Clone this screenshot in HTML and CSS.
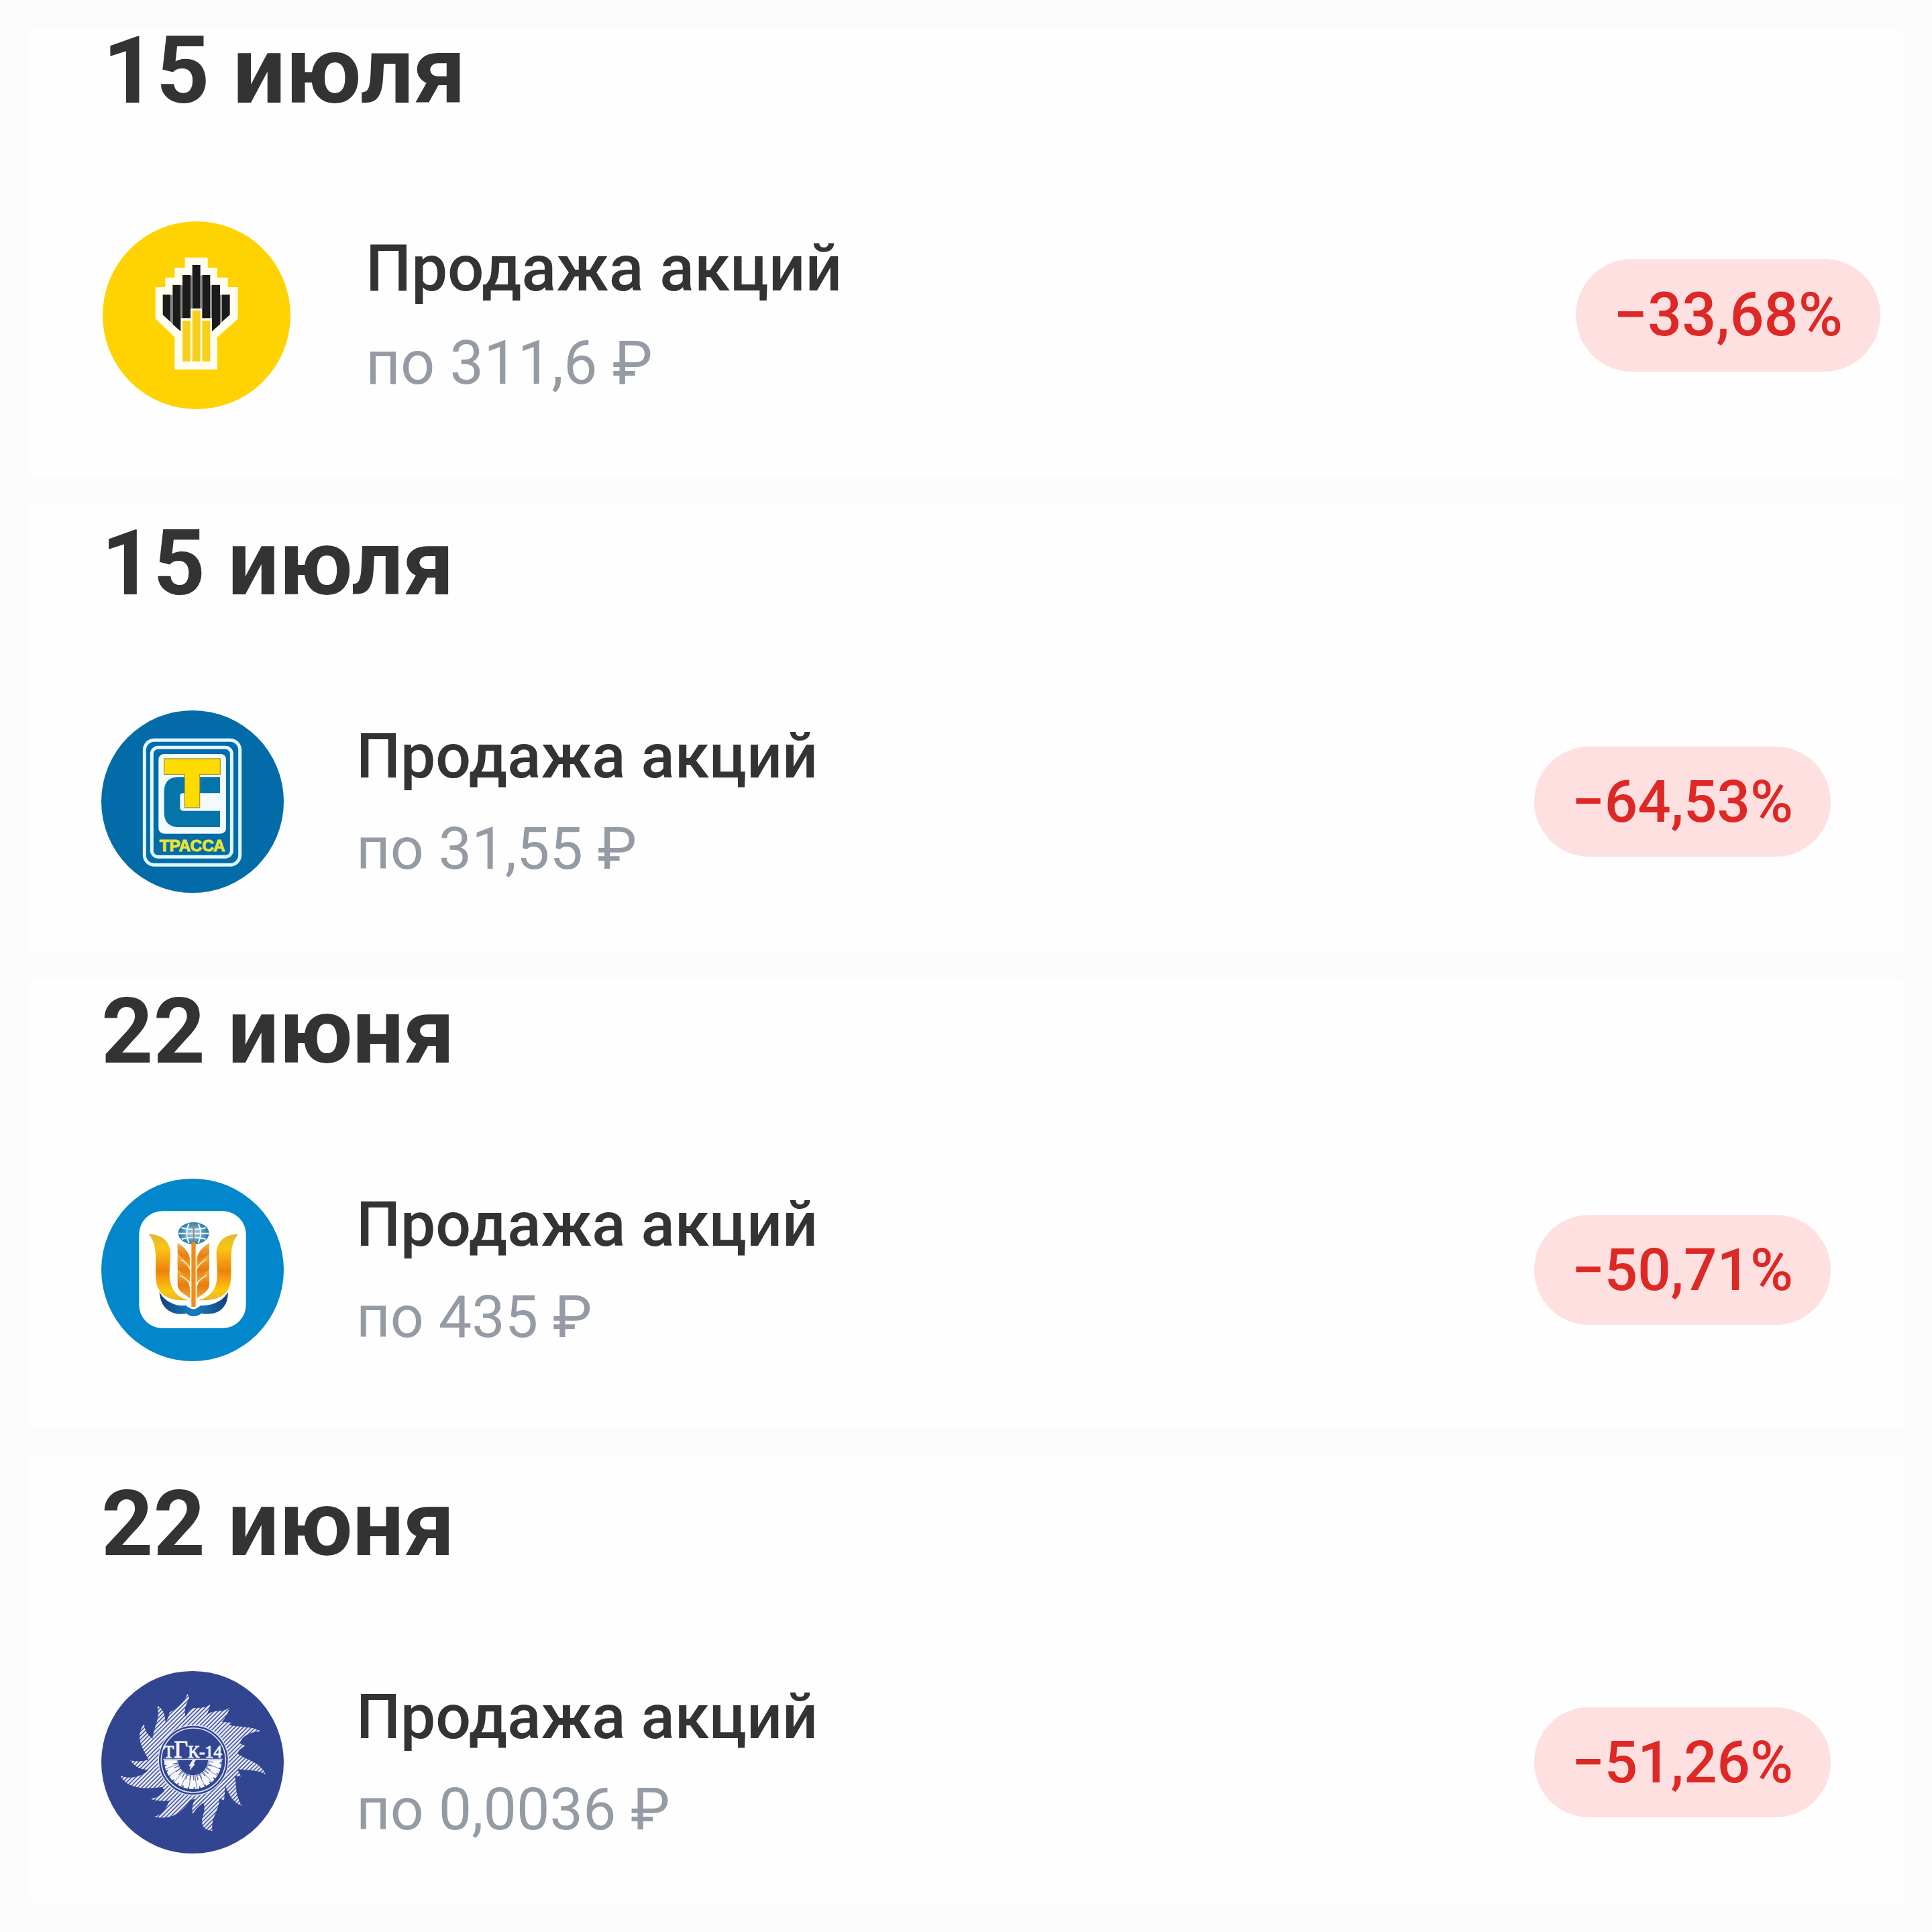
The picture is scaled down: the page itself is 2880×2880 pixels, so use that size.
FILE: index.html
```html
<!DOCTYPE html>
<html lang="ru">
<head>
    <meta charset="UTF-8">
    <meta name="viewport" content="width=device-width, initial-scale=1.0">
    <title>Продажа акций</title>
    <link rel="stylesheet" href="styles.css">
</head>
<body>
    <main class="feed">
        <section class="day day-large">
            <h2 class="day-title">15 июля</h2>
            <div class="deal">
                <svg class="logo" viewBox="40 32 840 840" aria-hidden="true">
                    <circle cx="460" cy="452" r="420" fill="#ffd202"/>
                    <path fill="#fffef0" d="M408 194H510V239H553V283H600V326H645V468L553 550V694H362V550L276 468V326H320V283H362V239H408Z"/>
                    <g fill="#1c1b1b">
                        <path d="M309 360H344V482L309 450Z"/>
                        <path d="M353 316H389V524L353 492Z"/>
                        <path d="M397 272H433V465H397Z"/>
                        <path d="M441 227H477V421H441Z"/>
                        <path d="M485 272H521V465H485Z"/>
                        <path d="M529 316H565V492L529 524Z"/>
                        <path d="M573 360H609V450L573 482Z"/>
                    </g>
                    <path fill="#8a8889" d="M344 362H353V490L344 482ZM389 318H397V465H389ZM433 274H441V421H433ZM477 274H485V421H477ZM521 318H529V465H521ZM565 362H573V482L565 490Z"/>
                    <path fill="#f8d01c" d="M397 476H433V658H397ZM441 430H477V658H441ZM485 476H521V658H485Z"/>
                </svg>
                <div class="deal-info">
                    <div class="deal-name">Продажа акций</div>
                    <div class="deal-price">по 311,6 ₽</div>
                </div>
                <span class="badge">−33,68%</span>
            </div>
        </section>

        <section class="day">
            <h2 class="day-title">15 июля</h2>
            <div class="deal">
                <svg class="logo" viewBox="33 41 816 816" aria-hidden="true">
                    <circle cx="441" cy="449" r="408" fill="#036ba8"/>
                    <g fill="none" stroke="#dff7fd">
                        <rect x="226" y="174" width="427" height="558" rx="44" stroke-width="15"/>
                        <rect x="259" y="207" width="357" height="489" rx="28" stroke-width="15"/>
                    </g>
                    <rect x="289" y="236" width="302" height="356" rx="24" fill="#f3fafc"/>
                    <path fill="#0474aa" d="M564 339H378Q314 339 314 405V496Q314 563 382 563H564V490H400Q385 490 385 476V424Q385 411 400 411H564Z"/>
                    <path fill="#ffdc00" stroke="#a59a3c" stroke-width="4" d="M314 257H565V327H473V476H406V327H314Z"/>
                    <text class="trassa" x="440" y="670" text-anchor="middle">ТРАССА</text>
                </svg>
                <div class="deal-info">
                    <div class="deal-name">Продажа акций</div>
                    <div class="deal-price">по 31,55 ₽</div>
                </div>
                <span class="badge">−64,53%</span>
            </div>
        </section>

        <section class="day">
            <h2 class="day-title">22 июня</h2>
            <div class="deal">
                <svg class="logo" viewBox="33 39 816 816" aria-hidden="true">
                    <defs>
                        <linearGradient id="petal" x1="0" y1="0" x2="0" y2="1">
                            <stop offset="0" stop-color="#e0b92c"/>
                            <stop offset=".22" stop-color="#fbc416"/>
                            <stop offset=".55" stop-color="#ee8209"/>
                            <stop offset=".85" stop-color="#fcc80c"/>
                            <stop offset="1" stop-color="#e8b52a"/>
                        </linearGradient>
                        <linearGradient id="grain" x1="0" y1="0" x2="0" y2="1">
                            <stop offset="0" stop-color="#f3b04a"/>
                            <stop offset=".55" stop-color="#e67d0c"/>
                            <stop offset="1" stop-color="#f0a93a"/>
                        </linearGradient>
                        <linearGradient id="water">
                            <stop offset="0" stop-color="#143f7c"/>
                            <stop offset=".5" stop-color="#1380c2"/>
                            <stop offset="1" stop-color="#143f7c"/>
                        </linearGradient>
                        <radialGradient id="globe">
                            <stop offset="0" stop-color="#b3dcee"/>
                            <stop offset="1" stop-color="#2a78a6"/>
                        </radialGradient>
                    </defs>
                    <circle cx="441" cy="447" r="408" fill="#0287cc"/>
                    <rect x="202" y="184" width="478" height="524" rx="104" fill="#fffffd"/>
                    <ellipse cx="446" cy="283" rx="69" ry="49" fill="url(#globe)"/>
                    <path fill="none" stroke="#f2fafd" stroke-width="6" d="M379 284H513M392 259Q446 274 500 259M392 309Q446 296 500 309M425 240Q405 283 425 327M467 240Q487 283 467 327"/>
                    <path stroke="#96806f" stroke-width="6" d="M446 236V318"/>
                    <g id="side">
                        <path fill="url(#petal)" d="M245 288C300 286 342 318 342 374C342 430 330 470 347 520C360 554 386 574 424 582C350 588 292 568 280 508C268 440 294 340 245 288Z"/>
                        <path fill="url(#grain)" d="M374 326C405 346 430 368 430 410V438C405 410 374 398 374 368Z"/>
                        <path fill="url(#grain)" d="M374 376C405 396 430 426 430 464V504C405 478 374 468 374 438Z"/>
                        <path fill="url(#grain)" d="M374 446C405 466 430 500 430 540V576C400 550 374 542 374 512Z"/>
                        <path fill="none" stroke="#ffe9a6" stroke-width="6" d="M388 400Q414 414 428 438M386 472Q412 484 428 506"/>
                    </g>
                    <use href="#side" transform="matrix(-1 0 0 1 890 0)"/>
                    <path fill="#f08c1e" d="M436 324H455V612H436Z"/>
                    <path fill="url(#water)" d="M293 545C316 590 370 612 412 606Q445 638 476 607C530 608 580 584 599 545C602 610 560 656 480 642Q445 668 414 642C340 656 296 610 293 545Z"/>
                </svg>
                <div class="deal-info">
                    <div class="deal-name">Продажа акций</div>
                    <div class="deal-price">по 435 ₽</div>
                </div>
                <span class="badge">−50,71%</span>
            </div>
        </section>

        <section class="day">
            <h2 class="day-title">22 июня</h2>
            <div class="deal">
                <svg class="logo" viewBox="33 33 816 816" aria-hidden="true">
                    <defs>
                        <pattern id="hatch" width="13" height="13" patternUnits="userSpaceOnUse" patternTransform="rotate(-45)">
                            <rect width="13" height="13" fill="#4757a2"/>
                            <rect width="13" height="8" fill="#e9ecf8"/>
                        </pattern>
                    </defs>
                    <circle cx="441" cy="441" r="408" fill="#324591"/>
                    <path fill="url(#hatch)" d="M418 136Q432 148 418 172Q398 210 412 240Q418 202 452 198Q495 200 520 183Q514 208 504 232Q522 212 550 212Q585 214 608 195Q598 232 572 260L618 264L604 274C650 286 700 278 748 302C700 304 662 322 652 356L678 368Q648 380 642 402C680 430 745 440 768 495C730 474 690 478 642 472L658 505L630 502C640 560 630 580 662 636C620 620 600 580 588 545L582 612L562 602C560 660 520 690 530 748C490 745 476 720 486 685Q500 650 490 622Q462 640 442 672Q434 640 452 604L428 612C400 660 350 702 270 685C310 672 325 645 338 612Q295 618 252 605Q300 595 316 566L304 552C240 560 150 565 118 500C160 520 220 505 244 474Q190 475 163 432Q200 442 244 430C220 380 180 330 224 270Q228 310 262 336C268 280 300 240 282 188C315 200 318 240 320 262Q332 250 338 218C370 200 400 180 418 136Z"/>
                    <circle cx="445" cy="432" r="156" fill="#324591" stroke="#dfe3f3" stroke-width="4"/>
                    <circle cx="445" cy="432" r="144" fill="none" stroke="#dfe3f3" stroke-width="5"/>
                    <path fill="none" stroke="#f7f8fc" stroke-width="62" stroke-dasharray="16 4" d="M345 432A98 98 0 0 0 541 432"/>
                    <path fill="none" stroke="#f7f8fc" stroke-width="30" d="M337 432A106 106 0 0 0 549 432"/>
                    <path fill="none" stroke="#7480b8" stroke-width="3" d="M372 432A71 71 0 0 0 514 432M324 470L372 450M338 500L382 470M360 528L398 484M390 548L416 494M424 558L434 500M460 558L452 500M496 548L470 494M526 528L488 484M550 500L504 470M562 470L514 450"/>
                    <path fill="#f2f4fb" d="M310 425H576V430H310ZM440 432L456 430L446 448L452 450L428 478L432 458L424 458Z"/>
                    <text class="tgk" x="442" y="420" text-anchor="middle">Т<tspan class="tgk-tall">Г</tspan>К-14</text>
                </svg>
                <div class="deal-info">
                    <div class="deal-name">Продажа акций</div>
                    <div class="deal-price">по 0,0036 ₽</div>
                </div>
                <span class="badge">−51,26%</span>
            </div>
        </section>
    </main>
</body>
</html>
```
FILE: styles.css
```css
:root {
    --page: #fcfcfc;
    --card: #fefefe;
    --text: #333333;
    --muted: #959ba4;
    --red: #dd2826;
    --red-bg: #fee0e0;
}

* {
    margin: 0;
    padding: 0;
    box-sizing: border-box;
}

body {
    font-family: Roboto, "Noto Sans", sans-serif;
    background-color: var(--page);
    color: var(--text);
}

/* Feed */
.feed {
    display: grid;
    grid-template-rows: repeat(4, 1fr);
    gap: 40px;
    min-height: 100vh;
    padding: 44px;
}

.day {
    background-color: var(--card);
    padding: 28px 107px 0;
}

.day:nth-child(3) {
    padding-top: 18px;
}

.day:nth-child(4) {
    padding-top: 44px;
}

.day-title {
    font-size: 135px;
    font-weight: 700;
    line-height: 120px;
    margin-bottom: 158px;
}

/* Deal row */
.deal {
    display: flex;
    align-items: center;
    gap: 108px;
}

.logo {
    flex: none;
    width: 272px;
    height: 272px;
}

.deal-info {
    flex: 1;
}

.deal-name {
    font-size: 93px;
    font-weight: 500;
    line-height: 140px;
}

.deal-price {
    font-size: 88px;
    line-height: 134px;
    color: var(--muted);
}

.badge {
    padding: 0 56px;
    border-radius: 84px;
    background-color: var(--red-bg);
    color: var(--red);
    font-size: 87px;
    font-weight: 500;
    line-height: 164px;
    white-space: nowrap;
}

/* Larger first card */
.day-large {
    padding: 2px 33px 0 109px;
}

.day-large .day-title {
    font-size: 139px;
    margin-bottom: 162px;
}

.day-large .deal {
    gap: 112px;
}

.day-large .logo {
    width: 280px;
    height: 280px;
}

.day-large .deal-name {
    font-size: 96px;
    line-height: 144px;
}

.day-large .deal-price {
    font-size: 90px;
    line-height: 140px;
}

.day-large .badge {
    font-size: 90px;
    line-height: 168px;
}

/* Lettering inside the logos */
.trassa {
    font: 700 73px "Liberation Sans", sans-serif;
    fill: #e8e337;
    stroke: #e8e337;
    stroke-width: 3px;
}

.tgk {
    font: 400 76px "Liberation Serif", serif;
    fill: #f2f4fb;
    stroke: #f2f4fb;
    stroke-width: 3px;
}

.tgk-tall {
    font-size: 108px;
}
```
